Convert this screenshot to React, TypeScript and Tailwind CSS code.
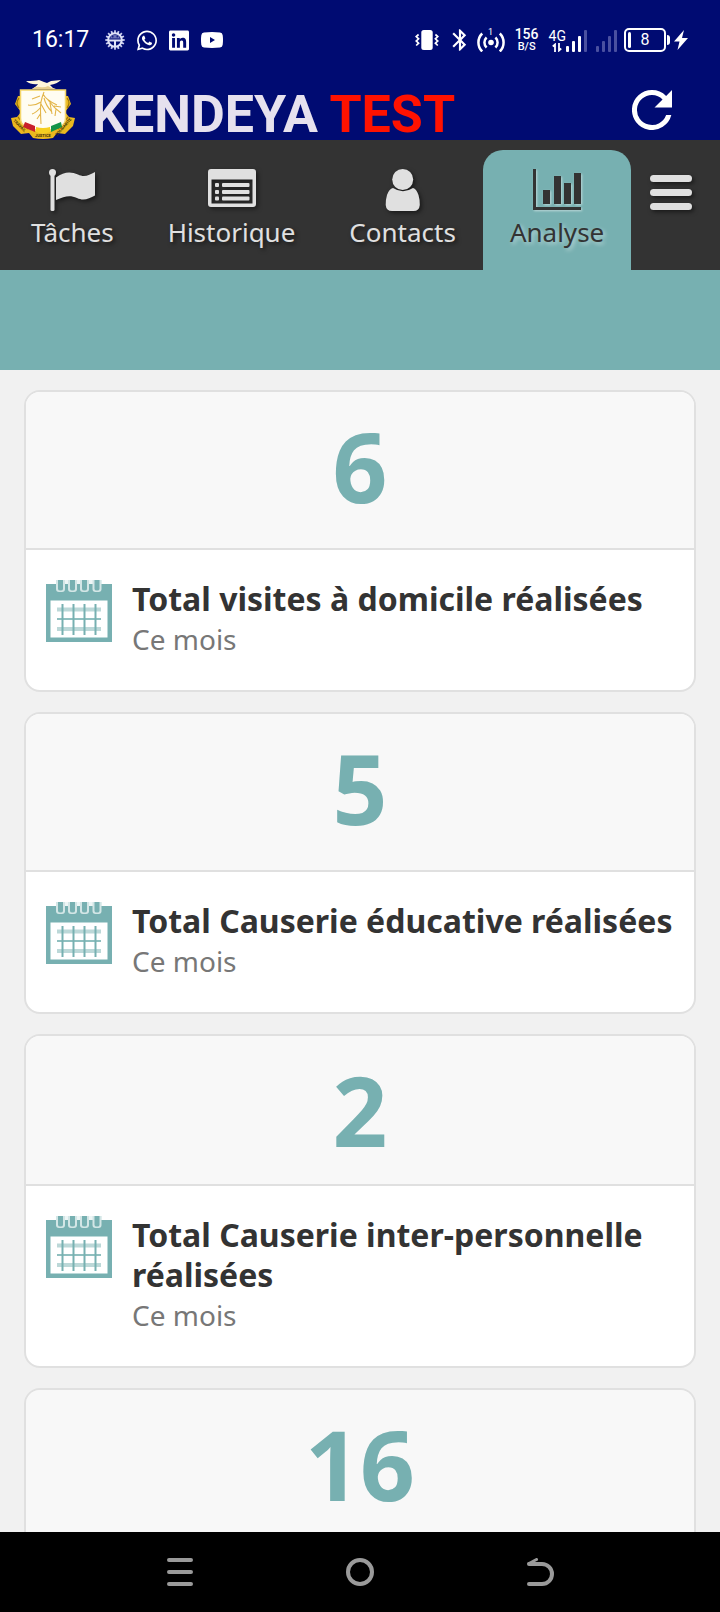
import React from "react";
import { FaLinkedin, FaWhatsapp } from "react-icons/fa";
import { MdBluetooth } from "react-icons/md";

const SHADOW = "[filter:drop-shadow(2px_2px_2px_rgba(0,0,0,0.5))]";

function GearIcon() {
  const teeth = Array.from({ length: 16 }, (_, i) => i * 22.5);
  return (
    <svg viewBox="0 0 20 20" className="size-5" aria-hidden="true">
      <g fill="#c9cdee">
        {teeth.map((a) => (
          <rect key={a} x="9.1" y="0.3" width="1.8" height="3" transform={`rotate(${a} 10 10)`} />
        ))}
      </g>
      <circle cx="10" cy="10" r="6.8" fill="none" stroke="#dfe2f7" strokeWidth="2" />
      <path d="M3.500 9.400h13v2h-5.500v5.600h-2v-5.600H3.500z" fill="#dfe2f7" />
      <path d="M5 8.400a5.400 5.400 0 0 1 10 0z" fill="#6c73b8" />
      <circle cx="7.800" cy="6.800" r=".8" fill="#000b72" />
      <circle cx="12.200" cy="6.800" r=".8" fill="#000b72" />
    </svg>
  );
}

function YoutubeIcon() {
  return (
    <svg viewBox="0 0 22 16" className="h-4 w-[22px]" aria-hidden="true">
      <path
        fillRule="evenodd"
        fill="#fff"
        d="M3 .5Q11-.4 19 .5q2.400.3 2.700 2.700.6 4.800 0 9.600-.3 2.400-2.700 2.700-8 .9-16 0Q.6 15.200.3 12.800-.3 8 .3 3.200.6.8 3 .5zM9 5v6l5-3z"
      />
    </svg>
  );
}

function VibrateIcon() {
  return (
    <svg viewBox="0 0 24 20" className="h-5 w-6" aria-hidden="true">
      <rect x="6.300" y="0" width="11.400" height="20" rx="2.500" fill="#fff" />
      <path
        d="M3.600 4.500 1.200 6.500l2.400 2.300L1.200 11l2.400 2.200-2.400 2.300M20.400 4.500l2.400 2-2.400 2.300 2.400 2.200-2.400 2.200 2.400 2.300"
        fill="none"
        stroke="#fff"
        strokeWidth="1.700"
      />
    </svg>
  );
}

function HotspotIcon() {
  return (
    <span className="relative block h-6 w-7">
      <svg viewBox="0 0 28 24" className="h-6 w-7" aria-hidden="true">
        <circle cx="14" cy="14.500" r="2.800" fill="#fff" />
        <path
          d="M9.600 9.500a6.800 6.800 0 0 0 0 10M18.400 9.500a6.800 6.800 0 0 1 0 10M5.200 5.500a12.600 12.600 0 0 0 0 18M22.800 5.500a12.600 12.600 0 0 1 0 18"
          fill="none"
          stroke="#fff"
          strokeWidth="2.500"
        />
      </svg>
      <span className="absolute inset-x-0 top-0 text-center text-[9px] leading-[9px]">1</span>
    </span>
  );
}

function Signal({ active }: { active: number }) {
  const tops = [16, 11, 6, 0];
  return (
    <svg viewBox="0 0 22 22" className="size-[22px]" aria-hidden="true">
      {tops.map((y, i) => (
        <rect key={y} x={i * 6} y={y} width="3" height={22 - y} rx="1" fill={i < active ? "#fff" : "#4a50a0"} />
      ))}
    </svg>
  );
}

function StatusBar() {
  return (
    <div className="flex h-20 items-center justify-between pl-8 pr-8 text-white">
      <div className="flex items-center">
        <span className="text-[23px]">16:17</span>
        <div className="ml-4 flex items-center gap-3">
          <GearIcon />
          <FaWhatsapp className="h-[23px] w-5" />
          <FaLinkedin className="h-[23px] w-5" />
          <YoutubeIcon />
        </div>
      </div>
      <div className="flex items-center">
        <VibrateIcon />
        <MdBluetooth className="ml-2 size-[26px]" />
        <span className="ml-1">
          <HotspotIcon />
        </span>
        <div className="ml-2 flex w-7 flex-col items-center font-medium">
          <span className="text-sm leading-[13px]">156</span>
          <span className="text-[11px] leading-[11px]">B/S</span>
        </div>
        <div className="ml-2 flex items-end">
          <div className="flex flex-col items-center">
            <span className="text-sm leading-[14px]">4G</span>
            <svg viewBox="0 0 10 9" className="h-[9px] w-2.5" aria-hidden="true">
              <path d="M3 9V1.500L.8 3.500M7 0v7.500l2.200-2" fill="none" stroke="#fff" strokeWidth="1.800" />
            </svg>
          </div>
          <Signal active={3} />
          <span className="ml-2">
            <Signal active={0} />
          </span>
        </div>
        <div className="ml-1.5 flex items-center">
          <div className="relative flex h-6 w-[42px] items-center justify-center rounded-[5px] border-2 border-white">
            <span className="absolute left-[2px] h-4 w-[3px] rounded-sm bg-white" />
            <span className="text-base leading-4">8</span>
          </div>
          <span className="ml-px h-2.5 w-[3px] rounded-r bg-white" />
        </div>
        <svg viewBox="0 0 14 20" className="ml-1 h-5 w-3.5" aria-hidden="true">
          <path d="M10 0 0 11.500h5.500L3.500 20 14 8H8z" fill="#fff" />
        </svg>
      </div>
    </div>
  );
}

function CoatOfArms() {
  return (
    <svg viewBox="0 0 66 60" className="h-[60px] w-[66px]" role="img" aria-label="Armoiries">
      <path d="M8 16 5 24l6 8-4 5-6 1 2 8 8 8 8-1 4 5q10 2 20 0l4-5 8 1 8-8 2-8-6-1-4-5 6-8-3-8z" fill="#eab81f" />
      <path d="M9 18q-4 5 0 10M57 18q4 5 0 10M8 37l10 12M58 37 48 49" fill="none" stroke="#9a7508" strokeWidth="1.200" />
      <path d="M10.500 10h45v28q0 7-6 9l-12 4-4.500 2-4.500-2-12-4q-6-2-6-9z" fill="#fffdf2" stroke="#f4d66a" strokeWidth="1.500" />
      <path d="m15 42 10 4v6l-12-5z" fill="#c9202b" />
      <path d="M26 47q7 2 14 0v5q-7 3-14 0z" fill="#f6cf20" />
      <path d="m41 46 10-4 1 5-11 5z" fill="#149447" />
      <path d="M22 9q5-3 6-5-7 1-12-3 9 0 13-1l5 2 3 1 4-2 10-1q-4 4-11 5 2 3 6 4z" fill="#fff6db" />
      <path d="M22 9q4-3 8-2t8-1q3 2 7 3z" fill="#e8cf8f" />
      <g fill="none" stroke="#e3b548" strokeWidth="1.100">
        <path d="M34 12q-2 5-3 10t0 22M31 22q-6 4-13 3M31 27q-5 6-9 7M31 33l-4 6M33 14q3 6 14 11M38 20q6 8 13 13M34 18q2 8 8 14M40 23l2 11M44 26l7 1M30 16l-8 3M31 24l5 9M46 29l-1 7" />
      </g>
      <g fill="#3d3206" fontFamily="Roboto, sans-serif" fontWeight="700" fontSize="4">
        <text x="25" y="57">JUSTICE</text>
        <text transform="translate(3 41) rotate(45)">TRAVAIL</text>
        <text transform="translate(47 56) rotate(-48)">SOLIDARITE</text>
      </g>
    </svg>
  );
}

function AppBar() {
  return (
    <div className="flex h-[60px] items-center pl-2.5 pr-12 font-bold">
      <CoatOfArms />
      <h1 className="ml-4 mt-[9px] text-[52px] leading-[50px] text-[#e6e1ee]">
        KENDEYA <span className="text-[#ff1200]">TEST</span>
      </h1>
      <button type="button" aria-label="Actualiser" className="ml-auto">
        <svg viewBox="4 4 16 16" className="size-10" aria-hidden="true">
          <path
            fill="#fff"
            d="M17.650 6.350A7.950 7.950 0 0 0 12 4a8 8 0 1 0 7.730 10h-2.080A6 6 0 1 1 12 6c1.660 0 3.140.69 4.220 1.780L13 11h7V4z"
          />
        </svg>
      </button>
    </div>
  );
}

function FlagIcon() {
  return (
    <svg viewBox="0 0 46 42" className="h-[42px] w-[46px]" aria-hidden="true" fill="currentColor">
      <circle cx="3.500" cy="3.500" r="3.500" />
      <rect x="1.500" y="3" width="4" height="39" rx="1.500" />
      <path d="M7 8.500C15 2.500 22 2.500 29 5.500c6 3 11 1 17-2.500v23.500c-6 3.500-12 5.500-18 2.500-7-3-12-2-21 2z" />
    </svg>
  );
}

function ListIcon() {
  return (
    <svg viewBox="0 0 48 38" className="h-[42px] w-12 pb-1" aria-hidden="true" fill="currentColor">
      <path fillRule="evenodd" d="M3 0h42a3 3 0 0 1 3 3v32a3 3 0 0 1-3 3H3a3 3 0 0 1-3-3V3a3 3 0 0 1 3-3zm.5 10.500v24h41v-24z" />
      {[14, 21, 27.5].map((y) => (
        <g key={y}>
          <rect x="7" y={y} width="4" height="4" rx="1" />
          <rect x="14" y={y} width="27.500" height="4" rx="1" />
        </g>
      ))}
    </svg>
  );
}

function PersonIcon() {
  return (
    <svg viewBox="0 0 36 42" className="h-[42px] w-9" aria-hidden="true" fill="currentColor">
      <circle cx="17.700" cy="10.500" r="10.500" />
      <path d="M8 19q10 6.500 20 0 3.500 1 5.500 7 1.500 5 1.300 10-.5 6-6.300 6H7Q1.200 42 .7 36q-.2-5 1.300-10 2-6 6-7z" />
    </svg>
  );
}

function ChartIcon() {
  return (
    <svg viewBox="0 0 48 42" className="h-[42px] w-12" aria-hidden="true" fill="currentColor">
      <path d="M0 0h3v38h45v3H0zM10 21h7v14h-7zM21 7h7v28h-7zM31 14h7v21h-7zM41 4h7v31h-7z" />
    </svg>
  );
}

const tabs = [
  { label: "Tâches", Icon: FlagIcon },
  { label: "Historique", Icon: ListIcon },
  { label: "Contacts", Icon: PersonIcon },
  { label: "Analyse", Icon: ChartIcon, active: true },
];

function TabBar() {
  return (
    <nav className="flex h-[130px] items-end bg-[#333333] pl-1">
      {tabs.map(({ label, Icon, active }) => (
        <a
          key={label}
          href="#"
          aria-current={active ? "page" : undefined}
          className={
            "flex h-[120px] flex-col items-center px-[27px] pt-[19px] " +
            (active
              ? "rounded-t-[20px] bg-[#77b0b1] text-[#333333] [text-shadow:2px_2px_4px_rgba(255,255,255,0.5)]"
              : "text-[#e0e0e0] [text-shadow:2px_2px_4px_rgba(0,0,0,0.6)]")
          }
        >
          <span className={active ? "[filter:drop-shadow(1px_1px_1px_rgba(255,255,255,0.5))]" : SHADOW}>
            <Icon />
          </span>
          <span className="mt-1 text-[26px] leading-[34px]">{label}</span>
        </a>
      ))}
      <button type="button" aria-label="Menu" className="ml-auto mr-7 flex h-[120px] items-start pt-[25px]">
        <span className={"flex w-[42px] flex-col gap-[7px] " + SHADOW}>
          <span className="h-[7px] rounded-sm bg-[#e0e0e0]" />
          <span className="h-[7px] rounded-sm bg-[#e0e0e0]" />
          <span className="h-[7px] rounded-sm bg-[#e0e0e0]" />
        </span>
      </button>
    </nav>
  );
}

function CalendarIcon() {
  return (
    <svg viewBox="0 0 66 62" className="mt-px h-[62px] w-[66px] shrink-0" aria-hidden="true">
      <path d="M0 4h66v58H0z" fill="#77b0b1" />
      <path d="M4.500 20.500h57v37h-57z" fill="#fff" />
      <path d="M10 0h46v4H10z" fill="#eef6f6" />
      {[14.5, 26.5, 38.5, 51].map((x) => (
        <g key={x}>
          <path d={`M${x - 4.5} 0v9q0 3 3 3h3q3 0 3-3V0z`} fill="#d3e6e6" />
          <path d={`M${x - 2.5} 0h5v9q0 1.500-2.500 1.500t-2.500-1.500z`} fill="#77b0b1" />
        </g>
      ))}
      <path d="M11 29.500h44M11 49h44" stroke="#bcd8d8" strokeWidth="4" />
      <path d="M11 39h44" stroke="#8fbfbf" strokeWidth="2" />
      <path d="M16.500 24v31M27.500 24v31M38.500 24v31M49.500 24v31" stroke="#77b0b1" strokeWidth="2" />
    </svg>
  );
}

type Target = { value: number; title?: string; subtitle?: string; compact?: boolean };

const targets: Target[] = [
  { value: 6, title: "Total visites à domicile réalisées", subtitle: "Ce mois" },
  { value: 5, title: "Total Causerie éducative réalisées", subtitle: "Ce mois" },
  { value: 2, title: "Total Causerie inter-personnelle réalisées", subtitle: "Ce mois", compact: true },
  { value: 16 },
];

function TargetCard({ value, title, subtitle, compact }: Target) {
  return (
    <li className="shrink-0 overflow-hidden rounded-2xl border-2 border-[#e0e0e0] bg-white">
      <div className={"border-b-2 border-[#e0e0e0] bg-[#f8f8f8] pt-6 text-center " + (compact ? "pb-6" : "pb-8")}>
        <p className="text-8xl leading-[100px] font-bold text-[#77b0b1]">{value}</p>
      </div>
      {title && (
        <div className="flex gap-5 px-5 pt-[29px] pb-[31px]">
          <CalendarIcon />
          <div className="min-w-0">
            <h2 className="text-[32px] leading-10 font-bold text-[#333333]">{title}</h2>
            <p className="text-[28px] leading-10 text-[#777777]">{subtitle}</p>
          </div>
        </div>
      )}
    </li>
  );
}

function SystemNav() {
  return (
    <div className="flex h-20 shrink-0 items-center justify-around bg-black px-[90px] text-[#9a9a9a]">
      <button type="button" aria-label="Applications récentes">
        <svg viewBox="0 0 28 28" className="size-7" fill="none" stroke="currentColor" strokeWidth="4" strokeLinecap="round">
          <path d="M3 2h22M3 14h22M3 26h22" />
        </svg>
      </button>
      <button type="button" aria-label="Accueil">
        <svg viewBox="0 0 28 28" className="size-7" fill="none" stroke="currentColor" strokeWidth="4">
          <circle cx="14" cy="14" r="12" />
        </svg>
      </button>
      <button type="button" aria-label="Retour">
        <svg viewBox="0 0 28 28" className="size-7" fill="none" stroke="currentColor" strokeWidth="4" strokeLinecap="round" strokeLinejoin="round">
          <path d="M3 6h13a10 10 0 0 1 0 20H3" />
          <path d="M3 5.500 10.500 1.500" strokeWidth="3" />
        </svg>
      </button>
    </div>
  );
}

export default function App() {
  return (
    <div className="flex h-screen flex-col bg-[#f1f1f1] font-['Noto_Sans',sans-serif]">
      <header className="shrink-0 bg-[#000b72] font-['Roboto',sans-serif]">
        <StatusBar />
        <AppBar />
      </header>
      <div className="shrink-0">
        <TabBar />
        <div className="h-[100px] bg-[#77b0b1]" />
      </div>
      <main className="min-h-0 flex-1 overflow-y-auto px-6 pt-5 [scrollbar-width:none]">
        <ul className="flex flex-col gap-5">
          {targets.map((t) => (
            <TargetCard key={t.value} {...t} />
          ))}
        </ul>
      </main>
      <SystemNav />
    </div>
  );
}
